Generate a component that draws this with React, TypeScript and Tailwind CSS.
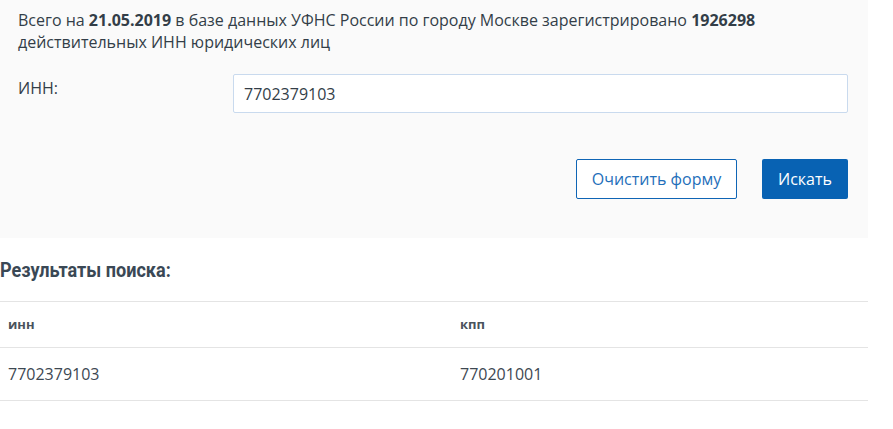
const rows = [{ inn: "7702379103", kpp: "770201001" }];

export default function App() {
  return (
    <div className="w-[893px] h-[429px] bg-white text-[#333e48] font-['Open_Sans',sans-serif]">
      <div className="w-[868px]">
        {/* search form */}
        <div className="bg-[#fafafa] pl-[18px] pr-[20px] pt-[9px] h-[238px]">
          <p className="text-[16px] leading-[22px] text-[#333e48]">
            Всего на <b>21.05.2019</b> в базе данных УФНС России по городу Москве
            зарегистрировано <b>1926298</b>
            <br />
            действительных ИНН юридических лиц
          </p>
          <div className="flex mt-[21px]">
            <label className="w-[215px] pt-[3px] text-[16px] leading-[22px]">ИНН:</label>
            <input
              readOnly
              value="7702379103"
              className="w-[615px] h-[39px] border border-[#c9daee] rounded-[2px] bg-white px-[10px] text-[16px] text-[#333e48] outline-none"
            />
          </div>
          <div className="flex justify-end gap-[25px] mt-[46px]">
            <button className="h-[40px] w-[161px] border border-[#0f65b5] rounded-[2px] bg-white text-[16px] text-[#1f6fba]">
              Очистить форму
            </button>
            <button className="h-[40px] w-[86px] rounded-[2px] bg-[#0862b3] text-[16px] text-white">
              Искать
            </button>
          </div>
        </div>

        {/* results */}
        <h2 className="mt-[19px] h-[26px] text-[21px] leading-[26px] font-bold text-[#3a4855] font-['Roboto',sans-serif]">
          <span className="inline-block origin-left scale-x-[0.86] whitespace-nowrap">Результаты поиска:</span>
        </h2>
        <table className="mt-[18px] w-full border-collapse table-fixed">
          <thead>
            <tr className="border-t border-[#e4e4e4] border-b">
              <th className="h-[46px] w-[460px] pl-[8px] text-left text-[13px] font-bold text-[#4a535c]">инн</th>
              <th className="h-[46px] text-left text-[13px] font-bold text-[#4a535c]">кпп</th>
            </tr>
          </thead>
          <tbody>
            {rows.map((r) => (
              <tr key={r.inn} className="border-b border-[#e4e4e4]">
                <td className="h-[53px] pl-[8px] text-[16px] text-[#3d4852]">{r.inn}</td>
                <td className="h-[53px] text-[16px] text-[#3d4852]">{r.kpp}</td>
              </tr>
            ))}
          </tbody>
        </table>
      </div>
    </div>
  );
}
